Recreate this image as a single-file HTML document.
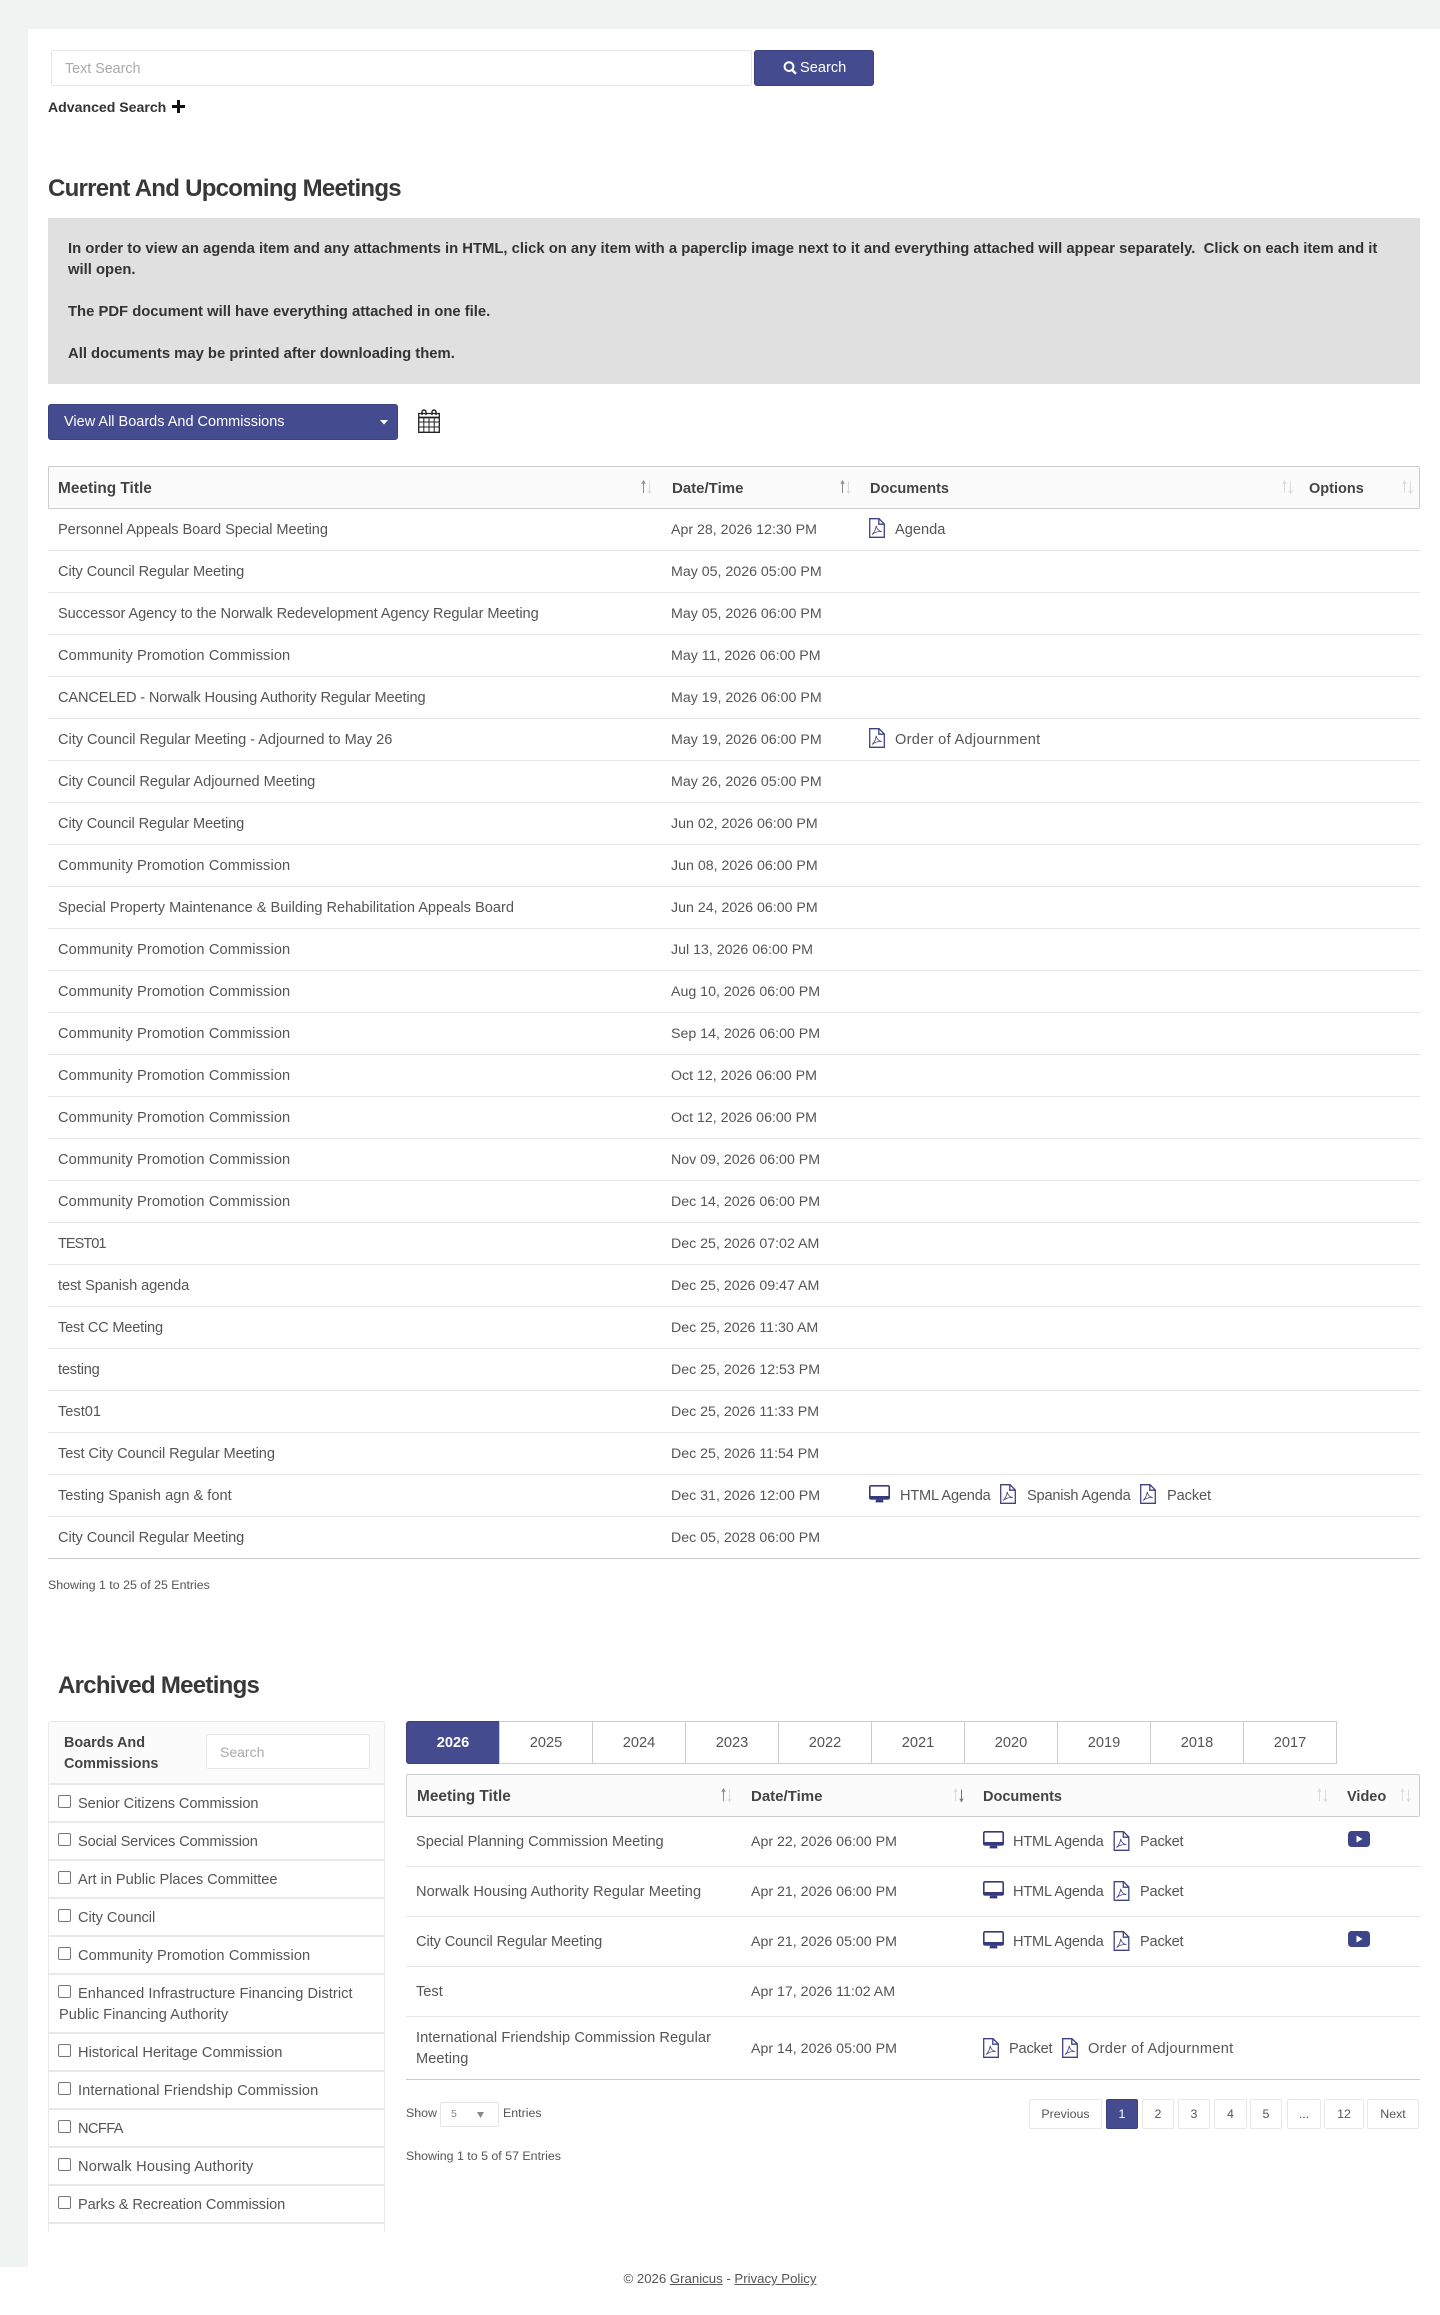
<!DOCTYPE html>
<html lang="en"><head><meta charset="utf-8"><title>Meetings</title>
<style>
*{box-sizing:border-box}
html,body{margin:0;padding:0;background:#fff}
body{position:relative;width:1440px;height:2315px;overflow:hidden;font-family:"Liberation Sans",Arial,sans-serif;color:#555;font-size:14.6px}
.a{position:absolute;white-space:nowrap}
#bg{left:0;top:0;width:1440px;height:2267px;background:#eff3f2}
#panel{left:28px;top:29px;width:1412px;height:2238px;background:#fff}
h2{position:absolute;margin:0;font-size:24px;font-weight:700;color:#383838;line-height:30px;white-space:nowrap;letter-spacing:-.72px}
.row{position:absolute;left:48px;width:1372px;height:42px;line-height:43px;border-bottom:1px solid #e6e6e6}
.row span,.ar span{position:absolute;white-space:nowrap;top:0}
.row .t{left:10px}
.row .d{left:623px;font-size:14.2px}
.c{letter-spacing:.12px}
.v{letter-spacing:-.1px}
.h{letter-spacing:-.2px}
.ar{position:absolute;left:406px;width:1014px;height:50px;line-height:51px;border-bottom:1px solid #e6e6e6}
.ar .t{left:10px}
.ar .d{left:345px;font-size:14.2px}
.hd{position:absolute;background:#fbfbfb;border:1px solid #ccc;border-radius:2px}
.hd b{position:absolute;top:0;color:#444;font-size:15px;line-height:43px;white-space:nowrap}
.hd b.n{font-size:14.5px;line-height:44px}
svg{position:absolute;display:block;overflow:visible}
.tab{position:absolute;top:1721px;width:94px;height:43px;border:1px solid #ccc;margin-left:-1px;text-align:center;line-height:43px;color:#555;font-size:14.6px}
.li{position:absolute;left:48px;width:337px;height:38px;border-top:2px solid #e9e9e9;border-left:1px solid #e9e9e9;border-right:1px solid #e9e9e9}
.li i{position:absolute;left:9px;top:10px;width:13px;height:13px;border:1px solid #777;border-radius:2px;background:#fff}
.li span{position:absolute;left:29px;top:9px;line-height:20px;white-space:nowrap}
.pg{position:absolute;top:2099px;height:30px;border:1px solid #e8e8e8;border-radius:2px;text-align:center;line-height:28px;font-size:12.4px;color:#555;background:#fff}
u{text-decoration:underline}
</style></head><body>
<svg width="0" height="0" style="position:absolute">
<defs>
<symbol id="pdf" viewBox="0 0 16 20"><path d="M.7.7H10L15.3 6V19.3H.7Z" fill="#fff" stroke="#3f4280" stroke-width="1.3"/><path d="M9.8.9V6.2H15" fill="none" stroke="#3f4280" stroke-width="1.3"/><path d="M3 16.5C5 15 7 11 7.2 7.8 7.8 11 9.5 13 12.8 13.6 9.5 13.2 6 14.2 3 16.5Z" fill="none" stroke="#3f4280" stroke-width=".8"/></symbol>
<symbol id="mon" viewBox="0 0 21 18"><path d="M2 .8H19A1.2 1.2 0 0 1 20.2 2V12.6A1.2 1.2 0 0 1 19 13.8H2A1.2 1.2 0 0 1 .8 12.6V2A1.2 1.2 0 0 1 2 .8Z" fill="#fff" stroke="#353a7c" stroke-width="1.6"/><path d="M.8 11H20.2V13A1.4 1.4 0 0 1 19 14.6H2A1.4 1.4 0 0 1 .8 13Z" fill="#353a7c"/><path d="M7 14.6H14L14.5 17.4H6.5Z" fill="#353a7c"/></symbol>
<symbol id="vid" viewBox="0 0 22 16"><rect width="22" height="16" rx="3.5" fill="#3d4488"/><path d="M8.5 4.5L14.5 8 8.5 11.5Z" fill="#fff"/></symbol>
<symbol id="su" viewBox="0 0 14 18"><path d="M3.5 15V3.5M1.8 6L3.5 3 5.2 6" fill="none" stroke="#8a8a8a" stroke-width="1"/><path d="M9.5 3.5V15M7.8 12.5L9.5 15.5 11.2 12.5" fill="none" stroke="#dcdcdc" stroke-width="1"/></symbol>
<symbol id="so" viewBox="0 0 14 18"><path d="M3.5 15V3.5M1.8 6L3.5 3 5.2 6" fill="none" stroke="#dcdcdc" stroke-width="1"/><path d="M9.5 3.5V15M7.8 12.5L9.5 15.5 11.2 12.5" fill="none" stroke="#dcdcdc" stroke-width="1"/></symbol>
<symbol id="sd" viewBox="0 0 14 18"><path d="M3.5 15V3.5M1.8 6L3.5 3 5.2 6" fill="none" stroke="#dcdcdc" stroke-width="1"/><path d="M9.5 3.5V15M7.8 12.5L9.5 15.5 11.2 12.5" fill="none" stroke="#777" stroke-width="1"/></symbol>
</defs></svg>

<div class="a" id="bg"></div>
<div class="a" id="panel"></div>

<!-- search -->
<div class="a" style="left:51px;top:50px;width:701px;height:36px;border:1px solid #e6e6e6;border-radius:3px;background:#fff"></div>
<div class="a" style="left:65px;top:50px;line-height:39px;color:#aaa;font-size:14.3px">Text Search</div>
<div class="a" style="left:754px;top:50px;width:120px;height:36px;background:#444b8f;border:1px solid #3b4180;border-radius:3px"></div>
<svg style="left:783px;top:61px" width="15" height="14" viewBox="0 0 15 14"><circle cx="6" cy="5.6" r="4.4" fill="none" stroke="#fff" stroke-width="2"/><path d="M9.2 9L13 12.8" stroke="#fff" stroke-width="2.4"/></svg>
<div class="a" style="left:800px;top:50px;line-height:36px;color:#fff;font-size:14.6px">Search</div>
<div class="a" style="left:48px;top:97px;line-height:20px;color:#333;font-weight:700;font-size:14.1px">Advanced Search</div>
<svg style="left:172px;top:100px" width="13" height="13" viewBox="0 0 13 13"><path d="M5 0H8V5H13V8H8V13H5V8H0V5H5Z" fill="#111"/></svg>

<h2 style="left:48px;top:174px">Current And Upcoming Meetings</h2>

<div class="a" style="left:48px;top:218px;width:1372px;height:166px;background:#e0e0e0"></div>
<div class="a" style="left:68px;top:239px;line-height:21px;font-weight:700;font-size:14.82px;color:#333">In order to view an agenda item and any attachments in HTML, click on any item with a paperclip image next to it and everything attached will appear separately.&nbsp; Click on each item and it<br>will open.<br><br>The PDF document will have everything attached in one file.<br><br>All documents may be printed after downloading them.</div>

<div class="a" style="left:48px;top:404px;width:350px;height:36px;background:#444b8f;border:1px solid #3b4180;border-radius:3px"></div>
<div class="a" style="left:64px;top:404px;line-height:36px;color:#fff;font-size:14.5px">View All Boards And Commissions</div>
<svg style="left:380px;top:420px" width="8" height="5" viewBox="0 0 8 5"><path d="M0 0H8L4 4.5Z" fill="#fff"/></svg>
<svg style="left:418px;top:409px" width="22" height="24" viewBox="0 0 22 24" fill="none" stroke="#222"><path d="M.7 4.5H21.3V23.3H.7Z" stroke-width="1.3"/><path d="M.7 8.5H21.3" stroke-width="1.8"/><path d="M.7 13H21.3M.7 18H21.3M5.8 8.5V23M11 8.5V23M16.2 8.5V23" stroke-width="1"/><path d="M4 6V3A2 2 0 0 1 8 3V6M14 6V3A2 2 0 0 1 18 3V6" stroke-width="1.4"/></svg>

<!-- upcoming table -->
<div class="hd" style="left:48px;top:466px;width:1372px;height:43px">
<b style="left:9px;font-size:15.4px">Meeting Title</b><b style="left:623px">Date/Time</b><b class="n" style="left:821px">Documents</b><b class="n" style="left:1260px">Options</b>
<svg style="left:591px;top:11px" width="14" height="18"><use href="#su"/></svg>
<svg style="left:790px;top:11px" width="14" height="18"><use href="#su"/></svg>
<svg style="left:1232px;top:11px" width="14" height="18"><use href="#so"/></svg>
<svg style="left:1352px;top:11px" width="14" height="18"><use href="#so"/></svg>
</div>

<div class="row" style="top:509px"><span class="t" style="letter-spacing:-.07px">Personnel Appeals Board Special Meeting</span><span class="d">Apr 28, 2026 12:30 PM</span><svg style="left:821px;top:9px" width="16" height="20"><use href="#pdf"/></svg><span style="left:847px">Agenda</span></div>
<div class="row" style="top:551px"><span class="t v">City Council Regular Meeting</span><span class="d">May 05, 2026 05:00 PM</span></div>
<div class="row" style="top:593px"><span class="t" style="letter-spacing:-.09px">Successor Agency to the Norwalk Redevelopment Agency Regular Meeting</span><span class="d">May 05, 2026 06:00 PM</span></div>
<div class="row" style="top:635px"><span class="t c">Community Promotion Commission</span><span class="d">May 11, 2026 06:00 PM</span></div>
<div class="row" style="top:677px"><span class="t" style="letter-spacing:-.14px">CANCELED - Norwalk Housing Authority Regular Meeting</span><span class="d">May 19, 2026 06:00 PM</span></div>
<div class="row" style="top:719px"><span class="t" style="letter-spacing:-.03px">City Council Regular Meeting - Adjourned to May 26</span><span class="d">May 19, 2026 06:00 PM</span><svg style="left:821px;top:9px" width="16" height="20"><use href="#pdf"/></svg><span style="left:847px;letter-spacing:.3px">Order of Adjournment</span></div>
<div class="row" style="top:761px"><span class="t" style="letter-spacing:-.04px">City Council Regular Adjourned Meeting</span><span class="d">May 26, 2026 05:00 PM</span></div>
<div class="row" style="top:803px"><span class="t v">City Council Regular Meeting</span><span class="d">Jun 02, 2026 06:00 PM</span></div>
<div class="row" style="top:845px"><span class="t c">Community Promotion Commission</span><span class="d">Jun 08, 2026 06:00 PM</span></div>
<div class="row" style="top:887px"><span class="t">Special Property Maintenance &amp; Building Rehabilitation Appeals Board</span><span class="d">Jun 24, 2026 06:00 PM</span></div>
<div class="row" style="top:929px"><span class="t c">Community Promotion Commission</span><span class="d">Jul 13, 2026 06:00 PM</span></div>
<div class="row" style="top:971px"><span class="t c">Community Promotion Commission</span><span class="d">Aug 10, 2026 06:00 PM</span></div>
<div class="row" style="top:1013px"><span class="t c">Community Promotion Commission</span><span class="d">Sep 14, 2026 06:00 PM</span></div>
<div class="row" style="top:1055px"><span class="t c">Community Promotion Commission</span><span class="d">Oct 12, 2026 06:00 PM</span></div>
<div class="row" style="top:1097px"><span class="t c">Community Promotion Commission</span><span class="d">Oct 12, 2026 06:00 PM</span></div>
<div class="row" style="top:1139px"><span class="t c">Community Promotion Commission</span><span class="d">Nov 09, 2026 06:00 PM</span></div>
<div class="row" style="top:1181px"><span class="t c">Community Promotion Commission</span><span class="d">Dec 14, 2026 06:00 PM</span></div>
<div class="row" style="top:1223px"><span class="t" style="letter-spacing:-1px">TEST01</span><span class="d">Dec 25, 2026 07:02 AM</span></div>
<div class="row" style="top:1265px"><span class="t v">test Spanish agenda</span><span class="d">Dec 25, 2026 09:47 AM</span></div>
<div class="row" style="top:1307px"><span class="t h">Test CC Meeting</span><span class="d">Dec 25, 2026 11:30 AM</span></div>
<div class="row" style="top:1349px"><span class="t h">testing</span><span class="d">Dec 25, 2026 12:53 PM</span></div>
<div class="row" style="top:1391px"><span class="t">Test01</span><span class="d">Dec 25, 2026 11:33 PM</span></div>
<div class="row" style="top:1433px"><span class="t" style="letter-spacing:-.09px">Test City Council Regular Meeting</span><span class="d">Dec 25, 2026 11:54 PM</span></div>
<div class="row" style="top:1475px"><span class="t">Testing Spanish agn &amp; font</span><span class="d">Dec 31, 2026 12:00 PM</span><svg style="left:821px;top:10px" width="21" height="18"><use href="#mon"/></svg><span class="h" style="left:852px">HTML Agenda</span><svg style="left:952px;top:9px" width="16" height="20"><use href="#pdf"/></svg><span class="h" style="left:979px">Spanish Agenda</span><svg style="left:1092px;top:9px" width="16" height="20"><use href="#pdf"/></svg><span class="v" style="left:1119px">Packet</span></div>
<div class="row" style="top:1517px;border-bottom-color:#ccc"><span class="t v">City Council Regular Meeting</span><span class="d">Dec 05, 2028 06:00 PM</span></div>

<div class="a" style="left:48px;top:1577px;line-height:16px;font-size:12.4px;color:#555">Showing 1 to 25 of 25 Entries</div>

<!-- archived -->
<h2 style="left:58px;top:1671px">Archived Meetings</h2>

<!-- left panel -->
<div class="a" style="left:48px;top:1721px;width:337px;height:62px;background:#fbfbfb;border:1px solid #e9e9e9;border-bottom:0;border-radius:3px 3px 0 0"></div>
<div class="a" style="left:64px;top:1733px;line-height:21px;color:#444;font-weight:700;font-size:14.4px">Boards And<br>Commissions</div>
<div class="a" style="left:206px;top:1734px;width:164px;height:35px;border:1px solid #e6e6e6;border-radius:3px;background:#fff;padding-left:13px;line-height:34px;color:#aaa;font-size:14px">Search</div>
<div class="li" style="top:1783px"><i></i><span style="letter-spacing:-.08px">Senior Citizens Commission</span></div>
<div class="li" style="top:1821px"><i></i><span style="letter-spacing:-.17px">Social Services Commission</span></div>
<div class="li" style="top:1859px"><i></i><span style="letter-spacing:-.03px">Art in Public Places Committee</span></div>
<div class="li" style="top:1897px"><i></i><span style="letter-spacing:-.06px">City Council</span></div>
<div class="li" style="top:1935px"><i></i><span class="c">Community Promotion Commission</span></div>
<div class="li" style="top:1973px;height:59px"><i></i><span style="letter-spacing:.07px">Enhanced Infrastructure Financing District</span><span style="left:10px;top:30px;letter-spacing:.05px">Public Financing Authority</span></div>
<div class="li" style="top:2032px"><i></i><span style="letter-spacing:.03px">Historical Heritage Commission</span></div>
<div class="li" style="top:2070px"><i></i><span style="letter-spacing:.1px">International Friendship Commission</span></div>
<div class="li" style="top:2108px"><i></i><span style="letter-spacing:-.6px">NCFFA</span></div>
<div class="li" style="top:2146px"><i></i><span style="letter-spacing:.17px">Norwalk Housing Authority</span></div>
<div class="li" style="top:2184px"><i></i><span style="letter-spacing:-.1px">Parks &amp; Recreation Commission</span></div>
<div class="li" style="top:2222px;height:10px"></div>

<!-- tabs -->
<div class="tab" style="left:406px;margin-left:0;width:94px;background:#444b8f;border-color:#3b4180;color:#fff;font-weight:700;border-radius:3px 0 0 3px">2026</div>
<div class="tab" style="left:500px">2025</div>
<div class="tab" style="left:593px">2024</div>
<div class="tab" style="left:686px">2023</div>
<div class="tab" style="left:779px">2022</div>
<div class="tab" style="left:872px">2021</div>
<div class="tab" style="left:965px">2020</div>
<div class="tab" style="left:1058px">2019</div>
<div class="tab" style="left:1151px">2018</div>
<div class="tab" style="left:1244px">2017</div>

<!-- archive table -->
<div class="hd" style="left:406px;top:1774px;width:1014px;height:43px">
<b style="left:10px;font-size:15.4px">Meeting Title</b><b style="left:344px">Date/Time</b><b class="n" style="left:576px">Documents</b><b class="n" style="left:940px">Video</b>
<svg style="left:313px;top:11px" width="14" height="18"><use href="#su"/></svg>
<svg style="left:545px;top:11px" width="14" height="18"><use href="#sd"/></svg>
<svg style="left:909px;top:11px" width="14" height="18"><use href="#so"/></svg>
<svg style="left:992px;top:11px" width="14" height="18"><use href="#so"/></svg>
</div>
<div class="ar" style="top:1817px"><span class="t" style="letter-spacing:-.04px">Special Planning Commission Meeting</span><span class="d">Apr 22, 2026 06:00 PM</span><svg style="left:577px;top:14px" width="21" height="18"><use href="#mon"/></svg><span class="h" style="left:607px">HTML Agenda</span><svg style="left:707px;top:14px" width="17" height="20"><use href="#pdf"/></svg><span class="h" style="left:734px">Packet</span><svg style="left:942px;top:14px" width="22" height="16"><use href="#vid"/></svg></div>
<div class="ar" style="top:1867px"><span class="t" style="letter-spacing:.07px">Norwalk Housing Authority Regular Meeting</span><span class="d">Apr 21, 2026 06:00 PM</span><svg style="left:577px;top:14px" width="21" height="18"><use href="#mon"/></svg><span class="h" style="left:607px">HTML Agenda</span><svg style="left:707px;top:14px" width="17" height="20"><use href="#pdf"/></svg><span class="h" style="left:734px">Packet</span></div>
<div class="ar" style="top:1917px"><span class="t v">City Council Regular Meeting</span><span class="d">Apr 21, 2026 05:00 PM</span><svg style="left:577px;top:14px" width="21" height="18"><use href="#mon"/></svg><span class="h" style="left:607px">HTML Agenda</span><svg style="left:707px;top:14px" width="17" height="20"><use href="#pdf"/></svg><span class="h" style="left:734px">Packet</span><svg style="left:942px;top:14px" width="22" height="16"><use href="#vid"/></svg></div>
<div class="ar" style="top:1967px"><span class="t">Test</span><span class="d">Apr 17, 2026 11:02 AM</span></div>
<div class="ar" style="top:2017px;height:63px;line-height:21px;border-bottom-color:#ccc"><span class="t" style="top:11px;letter-spacing:.07px">International Friendship Commission Regular<br>Meeting</span><span class="d" style="line-height:64px">Apr 14, 2026 05:00 PM</span><svg style="left:577px;top:21px" width="16" height="20"><use href="#pdf"/></svg><span class="h" style="left:603px;line-height:64px">Packet</span><svg style="left:656px;top:21px" width="16" height="20"><use href="#pdf"/></svg><span style="left:682px;line-height:64px;letter-spacing:.3px">Order of Adjournment</span></div>

<div class="a" style="left:406px;top:2105px;line-height:16px;font-size:12.4px">Show</div>
<div class="a" style="left:440px;top:2102px;width:59px;height:25px;border:1px solid #e6e6e6;border-radius:2px;background:#fff;padding-left:10px;line-height:23px;font-size:10.5px;color:#888">5</div>
<svg style="left:477px;top:2112px" width="7" height="6" viewBox="0 0 7 6"><path d="M0 0H7L3.5 6Z" fill="#888"/></svg>
<div class="a" style="left:503px;top:2105px;line-height:16px;font-size:12.4px">Entries</div>
<div class="a" style="left:406px;top:2148px;line-height:16px;font-size:12.4px">Showing 1 to 5 of 57 Entries</div>

<div class="pg" style="left:1029px;width:73px">Previous</div>
<div class="pg" style="left:1106px;width:32px;background:#444b8f;border-color:#3b4180;color:#fff">1</div>
<div class="pg" style="left:1142px;width:32px">2</div>
<div class="pg" style="left:1178px;width:32px">3</div>
<div class="pg" style="left:1214px;width:33px">4</div>
<div class="pg" style="left:1250px;width:32px">5</div>
<div class="pg" style="left:1287px;width:34px">...</div>
<div class="pg" style="left:1324px;width:40px">12</div>
<div class="pg" style="left:1367px;width:52px">Next</div>

<div class="a" style="left:0;width:1440px;top:2270px;text-align:center;line-height:18px;font-size:13.2px;color:#555">© 2026 <u>Granicus</u> - <u>Privacy Policy</u></div>
</body></html>
